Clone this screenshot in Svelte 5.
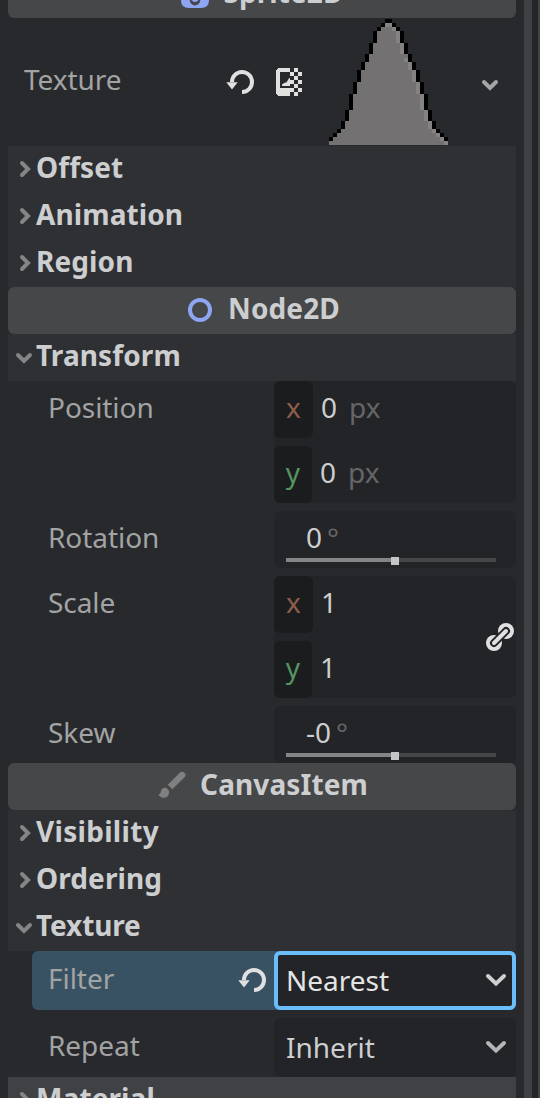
<script>
  const runs = [1, 1, 1, 3, 3, 2, 2, 3, 3, 4, 3, 2, 1, 1, 1];
  const cells = [];
  let y = 0;
  runs.forEach((h, i) => {
    const left = 14 - i;
    const right = 15 + i;
    cells.push({ x: left, y, w: right - left + 1, h, c: '#737172' });
    cells.push({ x: left, y, w: 1, h, c: '#000' });
    cells.push({ x: right, y, w: 1, h, c: '#000' });
    if (i > 1) {
      const skip = i === 5 ? 1 : 0;
      cells.push({ x: right - 1, y: y + skip, w: 1, h: h - skip, c: '#848283' });
    }
    y += h;
  });
  cells.push({ x: 14, y: 1, w: 2, h: 1, c: '#848283' });
  cells.push({ x: 0, y: 31, w: 29, h: 1, c: '#737172' });
  cells.push({ x: 29, y: 31, w: 1, h: 1, c: '#848283' });
</script>

{#snippet reset()}
  <svg class="reset" width="28" height="24" viewBox="0 0 28 24">
    <path d="M6 12A10 10 0 1 1 16 22" fill="none" stroke="#e0e0e0" stroke-width="4" />
    <path d="M.3 12.3H11.7L6 19.6Z" fill="#e0e0e0" />
  </svg>
{/snippet}

{#snippet chevron(kind)}
  {#if kind === 'right'}
    <svg class="arrow" width="28" height="47" viewBox="0 0 28 47"><path d="M14 17l6 6-6 6" /></svg>
  {:else}
    <svg class="arrow" width="28" height="47" viewBox="0 0 28 47"><path d="M10 21l6 6 6-6" /></svg>
  {/if}
{/snippet}

{#snippet fold(title, kind = 'right', fit = '')}
  <div class="fold {fit}">{@render chevron(kind)}<span>{title}</span></div>
{/snippet}

{#snippet vector(label, value, unit, linked)}
  <div class="prop">
    <span class="label">{label}</span>
    <div class="field vector">
      <div class="axis"><b class="x">x</b><span>{value}</span><i>{unit}</i></div>
      <div class="axis"><b class="y">y</b><span>{value}</span><i>{unit}</i></div>
      {#if linked}
        <svg class="link" width="28" height="28" viewBox="0 0 28 28">
          <circle cx="20" cy="8" r="8" fill="#e0e0e0" />
          <circle cx="8" cy="20" r="8" fill="#e0e0e0" />
          <path d="M8 20L20 8" stroke="#232427" stroke-width="8" stroke-linecap="round" />
          <path d="M8 20L20 8" stroke="#e0e0e0" stroke-width="4" stroke-linecap="round" />
        </svg>
      {/if}
    </div>
  </div>
{/snippet}

{#snippet angle(label, value)}
  <div class="prop">
    <span class="label">{label}</span>
    <div class="field angle">
      <div class="num">{value}<i>°</i></div>
      <div class="track"><div class="fill"></div><div class="grab"></div><div class="rest"></div></div>
    </div>
  </div>
{/snippet}

<div class="app">
  <div class="panel">
    <div class="head first">
      <svg width="28" height="28" viewBox="0 0 28 28">
        <path d="M8 0H20Q28 0 28 8V20Q28 28 20 28H8Q0 28 0 20V8Q0 0 8 0Z" fill="#8da5f3" />
        <path d="M8.6 19C8.6 27.6 19.4 27.6 19.4 19L17 20.4Q14 23.6 11 20.4Z" fill="#464749" />
      </svg>
      <span>Sprite2D</span>
    </div>
    <div class="texture">
      <span class="label">Texture</span>
      {@render reset()}
      <svg class="image" width="26" height="28" viewBox="0 0 26 28" fill="#e0e0e0" shape-rendering="crispEdges">
        <path d="M2 0H14V4H4V20H14V28H2L0 26V2Z" />
        <path d="M6 18V16.6L9 14.4H10.4L13.2 10H14V18Z" shape-rendering="auto" />
        <path d="M18 0h4v4h-4zM14 4h4v4h-4zM22 4h4v4h-4zM18 8h4v4h-4zM14 12h4v4h-4zM22 12h4v4h-4zM18 16h4v4h-4zM14 20h4v4h-4zM22 20h4v4h-4zM18 24h4v4h-4z" />
      </svg>
      <svg class="preview" width="119" height="126" viewBox="0 0 30 32" preserveAspectRatio="none" shape-rendering="crispEdges">
        {#each cells as c}<rect x={c.x} y={c.y} width={c.w} height={c.h} fill={c.c} />{/each}
      </svg>
      <svg class="more" width="18" height="12" viewBox="0 0 18 12"><path d="M3 3l6 6 6-6" /></svg>
    </div>

    {@render fold('Offset')}
    {@render fold('Animation')}
    {@render fold('Region')}

    <div class="head">
      <svg class="node" width="24" height="24" viewBox="0 0 24 24"><circle cx="12" cy="12" r="10" fill="none" stroke="#8da5f3" stroke-width="4" /></svg>
      <span>Node2D</span>
    </div>
    {@render fold('Transform', 'down')}
    <div class="props">
      {@render vector('Position', '0', 'px', false)}
      {@render angle('Rotation', '0')}
      {@render vector('Scale', '1', '', true)}
      {@render angle('Skew', '-0')}
    </div>

    <div class="head canvas">
      <svg class="brush" width="28" height="28" viewBox="0 0 28 28" fill="#808080">
        <path d="M22.3 1.2A3.4 3.4 0 0 1 27 5.8L14.4 18.2L9.8 13.8Z" />
        <path d="M3 20C3.4 17.6 6.2 16.2 8.6 17.2C11.2 18.4 11.6 21.4 10.6 23.8C9 27.4 3.4 28.4 0.4 23.4C2 23.2 2.6 22.2 3 20Z" />
      </svg>
      <span>CanvasItem</span>
    </div>
    {@render fold('Visibility', 'right', 'wide')}
    {@render fold('Ordering')}
    {@render fold('Texture', 'down', 'tight')}
    <div class="props">
      <div class="prop option active">
        <span class="label">Filter</span>
        {@render reset()}
        <div class="field select"><span>Nearest</span><svg width="22" height="14" viewBox="0 0 22 14"><path d="M3 3l8 7.6L19 3" /></svg></div>
      </div>
      <div class="prop option">
        <span class="label">Repeat</span>
        <div class="field select"><span>Inherit</span><svg width="22" height="14" viewBox="0 0 22 14"><path d="M3 3l8 7.6L19 3" /></svg></div>
      </div>
    </div>
    <div class="last">{@render fold('Material')}</div>
  </div>
  <div class="gap"></div>
  <div class="scroll"></div>
  <div class="edge"></div>
  <div class="outside"></div>
</div>

<style>
  :global(body) { margin: 0; background: #28292d; overflow: hidden; }
  .app {
    width: 540px; height: 1098px; overflow: hidden; box-sizing: border-box; padding-left: 8px;
    display: flex; background: #28292d; color: #cdcecf;
    font: 28px 'Noto Sans', sans-serif;
  }
  svg { flex: none; display: block; }
  .panel { width: 508px; flex: none; margin-top: -29px; }
  .gap { width: 8px; }
  .scroll { width: 8px; background: #3e4044; }
  .edge { width: 6px; background: #242529; }
  .outside { width: 2px; background: #434343; }
  .head {
    height: 47px; border-radius: 6px; background: #464749; display: flex; justify-content: center;
    font-weight: 700; line-height: 43px; gap: 16px; letter-spacing: 0.1px; box-sizing: border-box; padding-left: 5px;
  }
  .head svg { margin-top: 8px; }
  .head svg.node { margin-top: 11px; }
  .head.first svg { margin-top: 9px; }
  .head.first { gap: 14px; padding-left: 2px; }
  .head.canvas { gap: 14px; padding-left: 3px; }
  .head span { margin-right: 1px; }
  .fold { height: 47px; background: #2f3034; display: flex; font-weight: 700; line-height: 43px; letter-spacing: 0.1px; }
  .fold.wide { letter-spacing: 0.3px; }
  .fold.tight { letter-spacing: -0.12px; }
  .arrow { fill: none; stroke: #848587; stroke-width: 4; stroke-linecap: round; }
  .last .fold { background: #404144; }
  .texture { height: 128px; display: flex; }
  .texture .label { width: 202px; padding-left: 16px; line-height: 122px; }
  .label { color: #a2a3a3; box-sizing: border-box; flex: none; letter-spacing: -0.05px; }
  .texture .reset { margin: 52px 0 0 16px; }
  .image { margin: 50px 0 0 22px; }
  .preview { margin: 1px 0 0 27px; }
  .more { margin: 61px 0 0 33px; fill: none; stroke: #a4a5a6; stroke-width: 4; stroke-linecap: round; }
  .props { display: flex; flex-direction: column; gap: 8px; padding-left: 24px; }
  .prop { display: flex; }
  .prop .label { width: 242px; padding-left: 16px; line-height: 53px; }
  .field { width: 242px; box-sizing: border-box; border-radius: 6px; background: #232427; flex: none; }
  .vector { display: flex; flex-direction: column; gap: 8px; position: relative; }
  .axis { height: 57px; display: flex; line-height: 53px; }
  b, i { font-weight: 400; font-style: normal; }
  b { width: 39px; border-radius: 6px; background: #1b1c1e; text-align: center; margin-right: 8px; }
  b.x { color: #8b5f4b; }
  b.y { color: #569461; width: 38px; }
  i { color: #646567; }
  .axis i { margin-left: 12px; }
  .link { position: absolute; right: 2px; top: 47px; }
  .angle { height: 57px; padding: 0 20px 0 12px; }
  .num { height: 47px; padding-left: 20px; line-height: 53px; }
  .num i { margin-left: 5px; }
  .track { display: flex; align-items: flex-start; }
  .fill { width: 105px; height: 4px; background: #848587; }
  .grab { width: 8px; height: 8px; background: #c4c5c6; margin-top: -1px; }
  .rest { flex: 1; height: 4px; background: #464749; }
  .option { height: 59px; }
  .active { background: #385264; border-radius: 6px; }
  .prop.option .label { line-height: 55px; }
  .prop.active .label { width: 206px; }
  .active .reset { margin: 17px 8px 0 0; }
  .select { height: 59px; display: flex; justify-content: space-between; padding: 0 9px 0 12px; line-height: 59px; }
  .select svg { margin-top: 22px; fill: none; stroke: #b5b6b7; stroke-width: 4; stroke-linecap: round; }
  .active .select { border: 4px solid #69bdfb; padding: 0 5px 0 8px; line-height: 51px; color: #e3e4e4; }
  .active .select svg { margin-top: 18px; stroke: #cfcfd0; }
</style>
